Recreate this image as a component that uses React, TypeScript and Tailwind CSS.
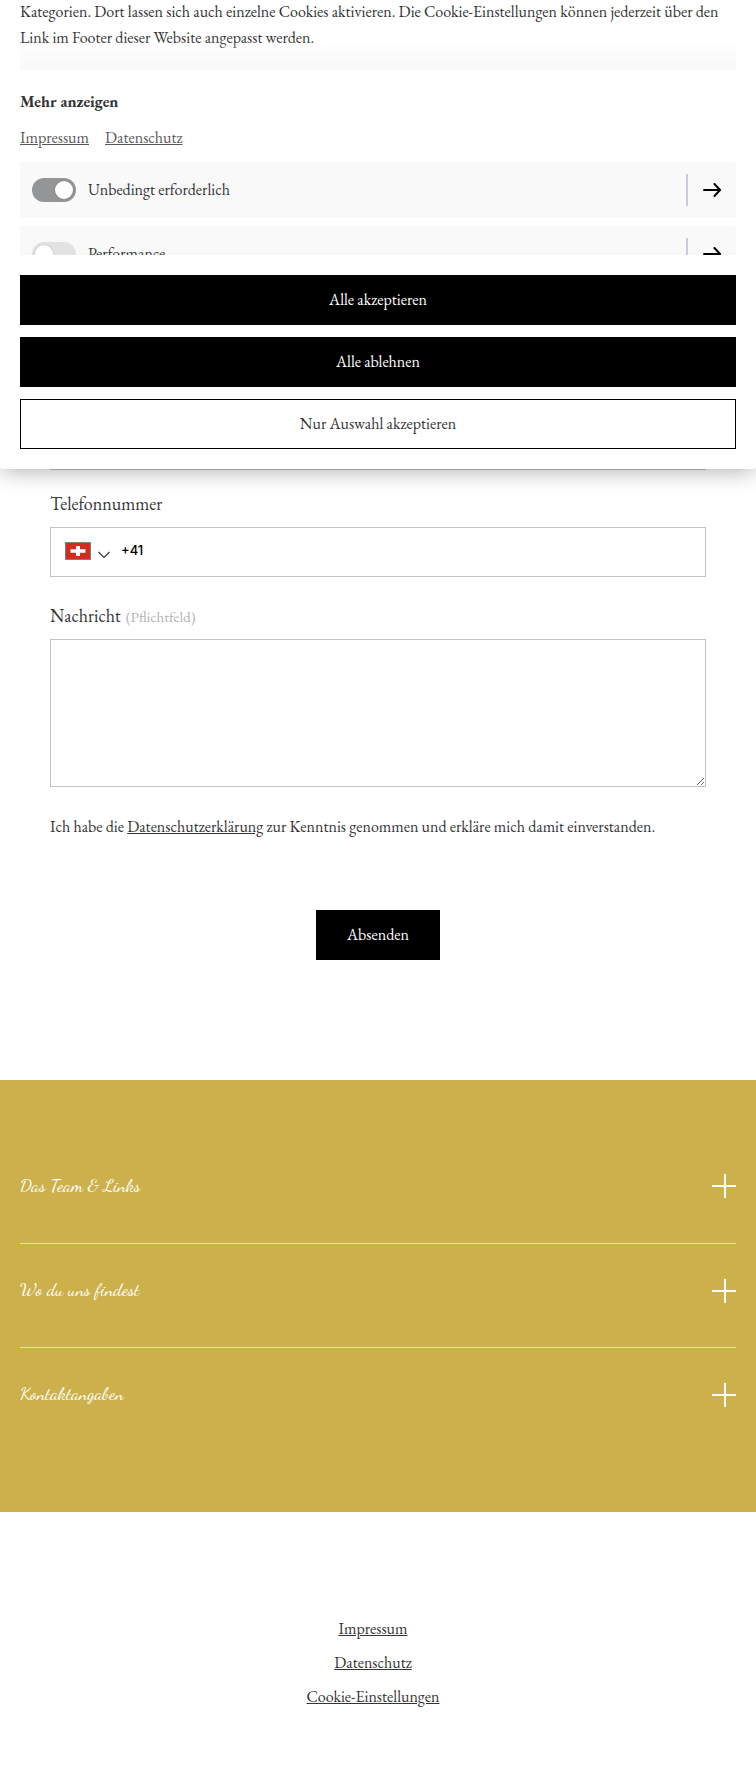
import { useState } from "react";

function ArrowRight() {
  return (
    <svg width="18" height="14" viewBox="0 0 18 14" fill="none" stroke="#000" strokeWidth="2" strokeLinecap="round">
      <path d="M1 7H16.5" />
      <path d="M11.500 1L17 7L11.500 13" strokeLinejoin="round" />
    </svg>
  );
}

function CategoryRow({ label, on }: { label: string; on: boolean }) {
  return (
    <div className="flex h-14 shrink-0 items-center rounded-[2px] bg-[#f9f9f9] pl-3 pr-[15px]">
      <button
        aria-label={label}
        className={`flex h-6 w-11 items-center rounded-full px-[3px] ${on ? "justify-end bg-[#949597]" : "bg-[#e2e2e2]"}`}
      >
        <span className="h-[18px] w-[18px] rounded-full bg-white shadow-[0_0_2px_rgba(0,0,0,0.2)]" />
      </button>
      <span className="ml-3 flex-1 leading-[26px]">{label}</span>
      <span className="mr-[15px] h-8 w-0.5 bg-[#c9cce0]" />
      <ArrowRight />
    </div>
  );
}

function CookiePanel() {
  return (
    <section className="relative z-10 flex h-[469px] flex-col rounded-b-[3px] bg-white px-5 shadow-[0_4px_22px_-2px_rgba(0,0,0,0.32)]">
      <div className="relative -mt-px h-[71px] shrink-0 overflow-hidden whitespace-nowrap leading-[26px]">
        <p>
          Kategorien. Dort lassen sich auch einzelne Cookies aktivieren. Die Cookie-Einstellungen können jederzeit über den
        </p>
        <p>Link im Footer dieser Website angepasst werden.</p>
        <div className="absolute inset-x-0 bottom-0 h-[30px] bg-gradient-to-b from-[#f8f8f8]/0 to-[#f8f8f8]" />
      </div>
      <button className="mt-[19px] h-[26px] text-left font-bold leading-[26px]">Mehr anzeigen</button>
      <nav className="mt-2.5 flex h-[26px] gap-4 leading-[26px] text-[#58595b]">
        <a href="#impressum" className="underline">Impressum</a>
        <a href="#datenschutz" className="underline">Datenschutz</a>
      </nav>
      <div className="mt-[11px] flex h-[93px] shrink-0 flex-col gap-2 overflow-hidden">
        <CategoryRow label="Unbedingt erforderlich" on />
        <CategoryRow label="Performance" on={false} />
      </div>
      <div className="mt-5 flex flex-col gap-3">
        <button className="h-[50px] bg-black text-white">Alle akzeptieren</button>
        <button className="h-[50px] bg-black text-white">Alle ablehnen</button>
        <button className="h-[50px] border border-black bg-white">Nur Auswahl akzeptieren</button>
      </div>
    </section>
  );
}

function SwissFlag() {
  return (
    <svg width="26" height="18" viewBox="0 0 26 18">
      <rect width="26" height="18" fill="#808080" />
      <rect x="1" y="1" width="24" height="16" fill="#d52b1e" />
      <path d="M11 4h4v3.300h5.500v3.400H15V14h-4v-3.300H5.500V7.300H11z" fill="#fff" />
    </svg>
  );
}

function ContactForm() {
  const [message, setMessage] = useState("");
  return (
    <form className="flex h-[611px] flex-col px-[50px]">
      <div className="h-px shrink-0 bg-[#c4c4c4]" />
      <label className="mt-[21px] h-[26px] text-lg leading-[26px]">Telefonnummer</label>
      <div className="mt-2.5 flex h-[50px] border border-[#c4c4c4] pl-3.5">
        <div className="mt-3.5">
          <SwissFlag />
        </div>
        <svg className="ml-[7px] mt-[23px]" width="12" height="8" viewBox="0 0 12 8" fill="none" stroke="#333" strokeWidth="1.1">
          <path d="M0.500 1L6 6.500L11.500 1" />
        </svg>
        <span className="ml-[11px] mt-3 font-['Inter','Liberation_Sans',sans-serif] text-[13px] font-[450] leading-5 text-black">+41</span>
      </div>
      <label className="mt-[26px] flex h-[26px] items-baseline text-lg leading-[26px]">
        Nachricht
        <span className="ml-[5px] text-[15.2px] text-[#b2b2b2]">(Pflichtfeld)</span>
      </label>
      <textarea
        value={message}
        onChange={(e) => setMessage(e.target.value)}
        className="mt-2.5 block h-[148px] w-full shrink-0 resize border border-[#c4c4c4] outline-none"
      />
      <p className="mt-[27px] h-[26px] leading-[26px]">
        Ich habe die <a href="#datenschutz" className="underline">Datenschutzerklärung</a> zur Kenntnis genommen und erkläre mich
        damit einverstanden.
      </p>
      <button type="button" className="mt-[70px] h-[50px] w-[124px] self-center bg-black text-white">
        Absenden
      </button>
    </form>
  );
}

function AccordionRow({ title, place, lift }: { title: string; place: string; lift: string }) {
  return (
    <div className={`flex items-start justify-between ${place}`}>
      <h3 className={`font-['Dancing_Script','Liberation_Serif',cursive] text-lg leading-[26px] ${lift}`}>{title}</h3>
      <svg width="24" height="24" viewBox="0 0 24 24" fill="#fff">
        <rect x="12" y="0" width="2" height="24" />
        <rect x="0" y="11" width="24" height="2" />
      </svg>
    </div>
  );
}

export default function App() {
  return (
    <div className="flex h-[1774px] w-full flex-col overflow-hidden bg-white font-['EB_Garamond','Liberation_Serif',serif] text-base text-[#333435]">
      <CookiePanel />
      <ContactForm />
      <section className="h-[432px] shrink-0 bg-[#ccb04b] px-5 text-white">
        <AccordionRow title="Das Team & Links" lift="-mt-[2px]" place="h-[164px] border-b border-[#e0dccb] pt-[94px]" />
        <AccordionRow title="Wo du uns findest" lift="-mt-[3px]" place="h-[104px] border-b border-[#e0dccb] pt-[35px]" />
        <AccordionRow title="Kontaktangaben" lift="-mt-[3px]" place="pt-[35px]" />
      </section>
      <footer className="flex flex-col items-center gap-2 pr-2.5 pt-[104px] leading-[26px]">
        <a href="#impressum" className="underline">Impressum</a>
        <a href="#datenschutz" className="underline">Datenschutz</a>
        <a href="#cookies" className="underline">Cookie-Einstellungen</a>
      </footer>
    </div>
  );
}
